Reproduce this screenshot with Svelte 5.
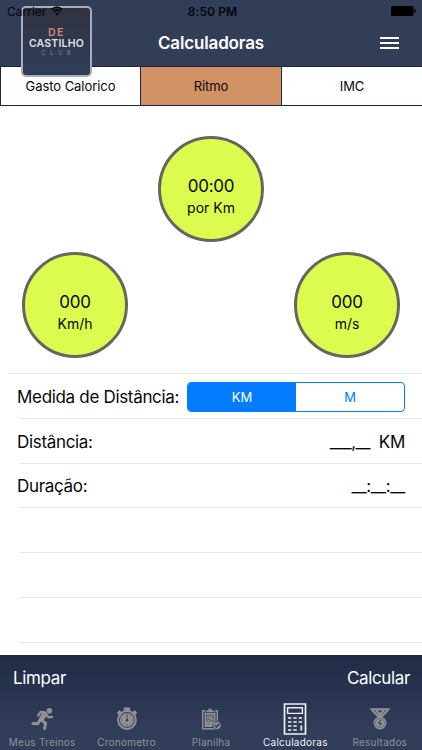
<script lang="ts">
  const tabs = ['Gasto Calorico', 'Ritmo', 'IMC'];
  const units = ['KM', 'M'];
  const navItems = [
    { id: 'run', label: 'Meus Treinos' },
    { id: 'watch', label: 'Cronometro' },
    { id: 'plan', label: 'Planilha' },
    { id: 'calc', label: 'Calculadoras' },
    { id: 'medal', label: 'Resultados' },
  ];

  let activeTab = $state('Ritmo');
  let unit = $state('KM');
  let activeNav = $state('calc');
</script>

{#snippet gauge(value: string, label: string)}
  <div class="gauge">
    <span class="value">{value}</span>
    <span class="unit">{label}</span>
  </div>
{/snippet}

<div class="screen">
  <header>
    <div class="logo">
      <div class="logode">DE</div>
      <div class="logoname">CASTILHO</div>
      <div class="logoclub">CLUB</div>
    </div>
    <div class="statusbar">
      <div class="carrier">
        <span>Carrier</span>
        <svg width="12" height="10" viewBox="0 0 12 10" fill="none" stroke="#05070c" stroke-width="1.7">
          <path d="M.6 3.7Q6-1.3 11.4 3.7M2.5 5.8Q6 2.6 9.5 5.8" />
          <path d="M6 9.5 4.1 7.5Q6 5.8 7.9 7.5Z" fill="#05070c" stroke="none" />
        </svg>
      </div>
      <span class="time">8:50 PM</span>
      <svg class="battery" width="25" height="10" viewBox="0 0 25 10">
        <rect width="22.5" height="10" rx="1.5" />
        <rect x="23.2" y="3.2" width="1.6" height="3.6" rx=".8" />
      </svg>
    </div>
    <div class="titlebar">
      <h1>Calculadoras</h1>
      <button class="menu" aria-label="Menu"><i></i><i></i><i></i></button>
    </div>
  </header>

  <div class="tabs">
    {#each tabs as tab}
      <button class:active={tab === activeTab} onclick={() => (activeTab = tab)}>{tab}</button>
    {/each}
  </div>

  <main>
    <div class="gauges">
      <div class="gaugerow top">{@render gauge('00:00', 'por Km')}</div>
      <div class="gaugerow">
        {@render gauge('000', 'Km/h')}
        {@render gauge('000', 'm/s')}
      </div>
    </div>

    <div class="list">
      <div class="row">
        <span class="label">Medida de Distância:</span>
        <div class="segmented">
          {#each units as u}
            <button class:active={u === unit} onclick={() => (unit = u)}>{u}</button>
          {/each}
        </div>
      </div>
      <div class="row">
        <span class="label">Distância:</span>
        <span class="entry"><span class="mask">___,__</span><span>{unit}</span></span>
      </div>
      <div class="row">
        <span class="label">Duração:</span>
        <span class="entry"><span class="mask time-mask">__:__:__</span></span>
      </div>
      <div class="row"></div>
      <div class="row"></div>
      <div class="row"></div>
    </div>
  </main>

  <footer>
    <div class="toolbar">
      <button class="clear">Limpar</button>
      <button class="compute">Calcular</button>
    </div>
    <nav>
      {#each navItems as item}
        <button class:active={item.id === activeNav} onclick={() => (activeNav = item.id)}>
          <span class="icon">
            {#if item.id === 'run'}
              <svg width="23" height="24" viewBox="0 0 23 24" fill="none" stroke="currentColor" stroke-linecap="round" stroke-linejoin="round">
                <circle cx="18.4" cy="3.8" r="2.8" fill="currentColor" stroke="none" />
                <path d="M7.2 8.4 9.8 5.1 14 5.6" stroke-width="2.5" />
                <path d="M13.7 7.2 10.3 12.3" stroke-width="5" />
                <path d="M15.5 7.8 17.5 10.4 21 9.8" stroke-width="2.3" />
                <path d="M8.9 13.2 6.8 16.8 1.9 16.4M10.8 13.3 14.6 16.2 13.6 21.6" stroke-width="3" />
              </svg>
            {:else if item.id === 'watch'}
              <svg width="22" height="24" viewBox="0 0 22 24" fill="none" stroke="currentColor">
                <circle cx="11" cy="13" r="8.9" stroke-width="2" />
                <circle cx="11" cy="13" r="7.1" fill="currentColor" stroke="none" />
                <path d="M7.8 2H14.2M11 2V5M1.8 6.8 4.6 4.2M20.2 6.8 17.4 4.2" stroke-width="3" />
                <path d="M11 7.2V13M11 18.8V17.6M5.2 13H6.4M16.8 13H15.6M7 9 7.7 9.7M15 9 14.3 9.7M7 17 7.7 16.3M15 17 14.3 16.3" stroke="#303b57" stroke-width=".8" />
                <circle cx="11" cy="13.3" r="1.2" fill="#303b57" stroke="none" />
              </svg>
            {:else if item.id === 'plan'}
              <svg width="22" height="24" viewBox="0 0 22 24" fill="none" stroke="currentColor">
                <path d="M2.7 3.8H17.3V21.8H2.7Z" stroke-width="1.5" />
                <path d="M4.6 5.5H15.5V20H4.6Z" fill="currentColor" stroke="none" />
                <path d="M5.5 5.5V3.3H8Q8 1.1 10 1.1T12 3.3H14.5V5.5Z" fill="currentColor" stroke="#2d3854" stroke-width=".7" />
                <path d="M6.5 8H13.5V14.2H6.5ZM8 8V11L10.5 13.5M10.5 8V10.2H13.5M7 12.3H9M11.8 12.2V14" stroke="#4a546b" stroke-width=".8" />
                <path d="M6.7 17H10" stroke="#4a546b" stroke-width=".7" />
                <circle cx="17" cy="18.5" r="4.2" fill="#8b8d94" stroke="#303b57" stroke-width=".8" />
                <path d="M15 18.5 16.5 20 19.2 16.8" stroke="#26324d" stroke-width="1.4" />
              </svg>
            {:else if item.id === 'calc'}
              <svg width="24" height="32" viewBox="0 0 24 32" fill="none" stroke="currentColor">
                <path d="M1.5 1H22.5V31H1.5Z" stroke-width="1.7" />
                <path d="M4.6 4.8H19.4V10.4H4.6Z" stroke-width="1.4" />
                <path d="M5 15H8.4M10.3 15H13.7M15.7 15H19M5 19H8.4M10.3 19H13.7M15.7 19H19M5 23H8.4M10.3 23H13.7M5 27H8.4M10.3 27H13.7" stroke-width="1.6" />
                <path d="M18.3 22.5V27.5" stroke-width="1.7" />
              </svg>
            {:else}
              <svg width="22" height="24" viewBox="0 0 22 24" fill="none" stroke="currentColor">
                <path d="M1 1.2H21L20 3.5H2Z" fill="currentColor" stroke="none" />
                <path d="M3.2 3.2 8.8 8.8H13.2L18.8 3.2M7 3.5 11 7.3 15 3.5" stroke-width="2.2" />
                <path d="M9 9.8H13" stroke-width="1.5" />
                <circle cx="11" cy="16" r="6.4" fill="currentColor" stroke="none" />
                <circle cx="11" cy="16" r="4.6" stroke="#4b556b" stroke-width=".6" />
                <path d="M12 12.8 9.3 16.2H12.6L10.2 19.2" stroke="#303b57" stroke-width="1" />
              </svg>
            {/if}
          </span>
          <span class="navlabel">{item.label}</span>
        </button>
      {/each}
    </nav>
  </footer>
</div>

<style>
  :global(body) {
    margin: 0;
  }
  .screen {
    width: 422px;
    height: 750px;
    display: flex;
    flex-direction: column;
    overflow: hidden;
    background: #fff;
    color: #080808;
    font-family: Inter, "Liberation Sans", sans-serif;
  }
  button {
    margin: 0;
    padding: 0;
    border: 0;
    background: none;
    color: inherit;
    font: inherit;
    letter-spacing: inherit;
  }
  header {
    position: relative;
    height: 66px;
    background: #323d58;
  }
  .logo {
    position: absolute;
    z-index: 1;
    left: 21px;
    top: 6px;
    box-sizing: border-box;
    width: 71px;
    height: 71px;
    padding-top: 18px;
    border: 2px solid #a9adb9;
    border-radius: 5px;
    background: linear-gradient(#30323d, #303c58 85%);
    color: #e0e1e7;
    text-align: center;
    white-space: nowrap;
  }
  .logode {
    color: #cf8972;
    font-size: 10.5px;
    line-height: 13px;
    font-weight: 600;
    letter-spacing: 1.5px;
  }
  .logoname {
    margin-top: -2px;
    font-size: 10.5px;
    line-height: 13px;
    font-weight: 600;
    letter-spacing: .2px;
  }
  .logoclub {
    padding-left: 4px;
    color: #858a98;
    font-size: 5.5px;
    line-height: 7px;
    letter-spacing: 4.8px;
  }
  .statusbar {
    position: relative;
    z-index: 2;
    height: 22px;
    display: grid;
    grid-template-columns: 1fr auto 1fr;
    align-items: center;
    padding: 0 6px 0 7px;
    color: #05070c;
    font-size: 12px;
  }
  .carrier {
    display: flex;
    align-items: center;
    gap: 5px;
  }
  .time {
    padding-left: 2px;
    font-weight: 600;
    letter-spacing: .1px;
  }
  .battery {
    justify-self: end;
    fill: #000;
  }
  .titlebar {
    height: 42px;
    display: grid;
    grid-template-columns: 1fr auto 1fr;
    align-items: center;
    padding: 0 23px;
  }
  h1 {
    grid-column: 2;
    margin: 0;
    color: #fff;
    font-size: 17px;
    font-weight: 600;
    letter-spacing: -.15px;
  }
  .menu {
    justify-self: end;
    width: 19px;
    display: grid;
    gap: 3px;

    & i {
      height: 2px;
      background: #fff;
    }
  }
  .tabs {
    height: 40px;
    box-sizing: border-box;
    display: grid;
    grid-template-columns: 139px 140px 140px;
    gap: 1px;
    padding: 1px;
    background: #1b2545;

    & button {
      background: #fff;
      font-size: 13px;
      letter-spacing: -.05px;
    }
    & .active {
      background: #d29266;
    }
  }
  main {
    flex: 1;
  }
  .gauges {
    height: 267px;
    box-sizing: border-box;
    padding: 30px 22px 0;
  }
  .gaugerow {
    display: flex;
    justify-content: space-between;

    &.top {
      justify-content: center;
      margin-bottom: 10px;
    }
  }
  .gauge {
    box-sizing: border-box;
    width: 106px;
    height: 106px;
    padding-top: 16px;
    display: flex;
    flex-direction: column;
    align-items: center;
    justify-content: center;
    border: 3px solid #66665f;
    border-radius: 50%;
    background: #dcfb4f;
  }
  .value {
    font-size: 17px;
    line-height: 21px;
    letter-spacing: -.25px;
  }
  .unit {
    font-size: 14px;
    line-height: 21px;
  }
  .list {
    margin-left: 8px;
    border-top: 1px solid #e6e6e8;
  }
  .row {
    height: 44.8px;
    box-sizing: border-box;
    display: flex;
    align-items: center;
    justify-content: space-between;
    padding: 1px 17px 0 9px;
    background: linear-gradient(#e6e6e8, #e6e6e8) 12px 100% / 100% 1px no-repeat;
    font-size: 17px;
    letter-spacing: -.32px;
  }
  .segmented {
    width: 218px;
    height: 30px;
    box-sizing: border-box;
    display: grid;
    grid-template-columns: 1fr 1fr;
    overflow: hidden;
    border: 1px solid #057bff;
    border-radius: 4px;
    color: #057bff;
    font-size: 13px;
    letter-spacing: 0;

    & .active {
      background: #057bff;
      color: #fff;
    }
  }
  .entry {
    display: flex;
    gap: 9px;
  }
  .mask {
    letter-spacing: -.6px;
  }
  .time-mask {
    letter-spacing: -.35px;
  }
  footer {
    height: 95px;
    background: linear-gradient(#202b46, #303c58 75%, #323d5a);
    color: #fff;
  }
  .toolbar {
    height: 44px;
    display: flex;
    align-items: center;
    justify-content: space-between;
    padding: 2px 12px 0 13px;
    box-sizing: border-box;
    font-size: 17px;
    letter-spacing: -.35px;
  }
  nav {
    display: grid;
    grid-template-columns: repeat(5, 1fr);

    & button {
      height: 51px;
      color: #909196;
    }
    & .active {
      color: #edf0f8;
    }
  }
  .icon {
    height: 37px;
    display: grid;
    place-items: center;
  }
  .icon svg {
    display: block;
  }
  .navlabel {
    display: block;
    margin-top: -1px;
    padding-bottom: 1px;
    font-size: 10px;
    line-height: 12px;
    letter-spacing: .25px;
    white-space: nowrap;
  }
</style>
